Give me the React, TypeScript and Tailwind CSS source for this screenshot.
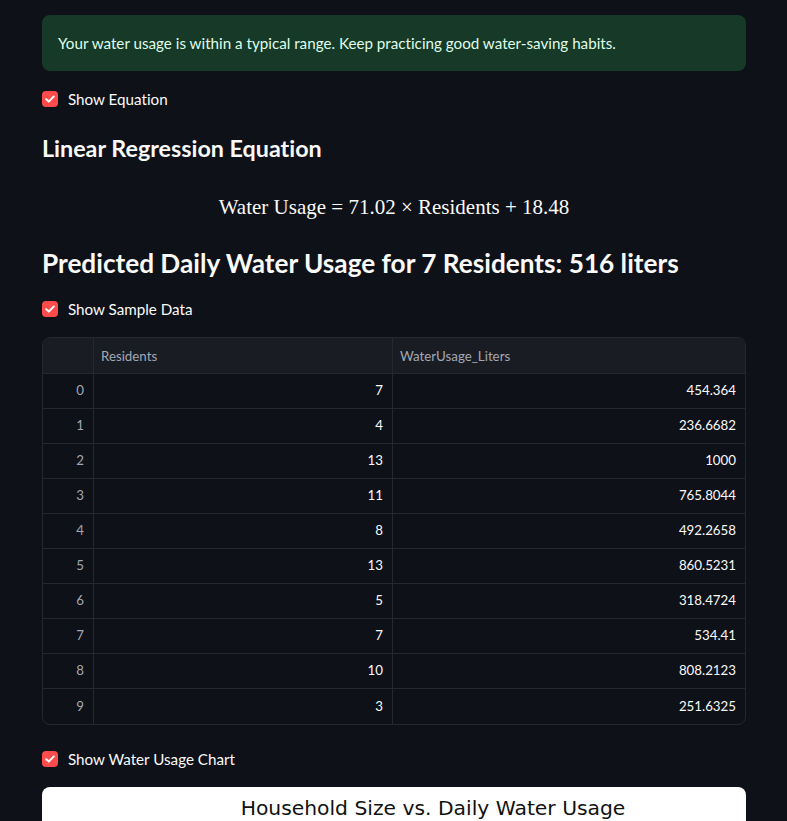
import React from "react";

const rows: [number, string, string][] = [
  [0, "7", "454.364"],
  [1, "4", "236.6682"],
  [2, "13", "1000"],
  [3, "11", "765.8044"],
  [4, "8", "492.2658"],
  [5, "13", "860.5231"],
  [6, "5", "318.4724"],
  [7, "7", "534.41"],
  [8, "10", "808.2123"],
  [9, "3", "251.6325"],
];

function Check({ label }: { label: string }) {
  return (
    <div className="flex items-center gap-[10px] h-[24px]">
      <div className="w-[16px] h-[16px] rounded-[4px] bg-[#ff4b4b] flex items-center justify-center">
        <svg width="10" height="8" viewBox="0 0 10 8" fill="none">
          <path d="M1.2 4.2 L3.8 6.6 L8.8 1.4" stroke="white" strokeWidth="2" strokeLinecap="round" strokeLinejoin="round" />
        </svg>
      </div>
      <span className="text-[15.2px] text-[#fafafa]">{label}</span>
    </div>
  );
}

export default function App() {
  return (
    <div
      className="w-[787px] h-[821px] overflow-hidden bg-[#0e1117] text-[#fafafa] [font-variant-ligatures:none]"
      style={{ fontFamily: "Lato, 'Noto Sans', sans-serif" }}
    >
      <div className="w-[704px] ml-[42px] pt-[15px] flex flex-col">
        <div className="h-[56px] rounded-[8px] bg-[#173928] text-[#dffde9] text-[15.2px] flex items-center px-[16px]">
          Your water usage is within a typical range. Keep practicing good water-saving habits.
        </div>
        <div className="mt-[16px]">
          <Check label="Show Equation" />
        </div>
        <h3 className="mt-[24px] text-[23.3px] font-bold leading-[26px]">Linear Regression Equation</h3>
        <div
          className="mt-[34px] text-center text-[21px] leading-[24px]"
          style={{ fontFamily: "'Liberation Serif', serif" }}
        >
          Water Usage = 71.02 × Residents + 18.48
        </div>
        <h2 className="mt-[28px] text-[26.2px] font-bold leading-[32px]">
          Predicted Daily Water Usage for 7 Residents: 516 liters
        </h2>
        <div className="mt-[18px]">
          <Check label="Show Sample Data" />
        </div>
        <div className="mt-[16px] border border-[#262730] rounded-[8px] overflow-hidden text-[13.3px]">
          <div className="flex h-[36px] bg-[#1a1c24] border-b border-[#262730] text-[#a3a8b4]">
            <div className="w-[51px] border-r border-[#262730]"></div>
            <div className="w-[299px] border-r border-[#262730] flex items-center px-[7px] pt-[2px]">Residents</div>
            <div className="flex-1 flex items-center px-[7px] pt-[2px]">WaterUsage_Liters</div>
          </div>
          {rows.map(([i, r, w], idx) => (
            <div
              key={i}
              className={`flex h-[35px] ${idx < rows.length - 1 ? "border-b border-[#262730]" : ""}`}
            >
              <div className="w-[51px] border-r border-[#262730] flex items-center justify-end px-[9px] text-[#a3a8b4]">
                {i}
              </div>
              <div className="w-[299px] border-r border-[#262730] flex items-center justify-end px-[9px]">{r}</div>
              <div className="flex-1 flex items-center justify-end px-[9px]">{w}</div>
            </div>
          ))}
        </div>
        <div className="mt-[22px]">
          <Check label="Show Water Usage Chart" />
        </div>
        <div className="mt-[16px] h-[200px] bg-white rounded-t-[8px] flex justify-center pl-[78px]">
          <span
            className="text-[20.3px] text-[#111] leading-[24px] mt-[9px]"
            style={{ fontFamily: "'DejaVu Sans', sans-serif" }}
          >
            Household Size vs. Daily Water Usage
          </span>
        </div>
      </div>
    </div>
  );
}
